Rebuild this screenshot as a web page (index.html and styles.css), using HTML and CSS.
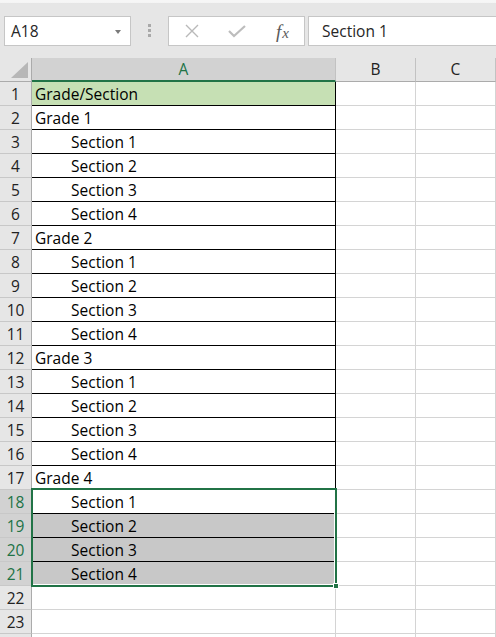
FILE: index.html
```html
<!DOCTYPE html>
<html>
<head>
<meta charset="utf-8">
<link rel="stylesheet" href="styles.css">
</head>
<body>
<div class="app">
  <div class="topstrip"></div>
  <div class="toolbar">
    <div class="namebox"><span class="ref">A18</span><span class="caret"></span></div>
    <div class="dots"><i></i><i></i><i></i></div>
    <div class="fbtns">
      <div class="fbtn">
        <svg width="14" height="14" viewBox="0 0 14 14"><path d="M1 1 L13 13 M13 1 L1 13" stroke="#b9b9b9" stroke-width="1.4" fill="none"/></svg>
      </div>
      <div class="fbtn">
        <svg width="18" height="14" viewBox="0 0 18 14"><path d="M1 7 L6 12 L17 2" stroke="#bdbdbd" stroke-width="2.2" fill="none"/></svg>
      </div>
      <div class="fbtn fx"><span class="f">f</span><span class="x">x</span></div>
    </div>
    <div class="formula">Section 1</div>
  </div>

  <div class="sheet">
    <div class="corner"><svg width="32" height="24" viewBox="0 0 32 24"><path d="M11 20 L28 20 L28 4 Z" fill="#b7b7b7"/></svg></div>
    <div class="ch on">A</div>
    <div class="ch">B</div>
    <div class="ch">C</div>

    <div class="rh">1</div><div class="c a head">Grade/Section</div><div class="c"></div><div class="c"></div>
    <div class="rh">2</div><div class="c a">Grade 1</div><div class="c"></div><div class="c"></div>
    <div class="rh">3</div><div class="c a ind">Section 1</div><div class="c"></div><div class="c"></div>
    <div class="rh">4</div><div class="c a ind">Section 2</div><div class="c"></div><div class="c"></div>
    <div class="rh">5</div><div class="c a ind">Section 3</div><div class="c"></div><div class="c"></div>
    <div class="rh">6</div><div class="c a ind">Section 4</div><div class="c"></div><div class="c"></div>
    <div class="rh">7</div><div class="c a">Grade 2</div><div class="c"></div><div class="c"></div>
    <div class="rh">8</div><div class="c a ind">Section 1</div><div class="c"></div><div class="c"></div>
    <div class="rh">9</div><div class="c a ind">Section 2</div><div class="c"></div><div class="c"></div>
    <div class="rh">10</div><div class="c a ind">Section 3</div><div class="c"></div><div class="c"></div>
    <div class="rh">11</div><div class="c a ind">Section 4</div><div class="c"></div><div class="c"></div>
    <div class="rh">12</div><div class="c a">Grade 3</div><div class="c"></div><div class="c"></div>
    <div class="rh">13</div><div class="c a ind">Section 1</div><div class="c"></div><div class="c"></div>
    <div class="rh">14</div><div class="c a ind">Section 2</div><div class="c"></div><div class="c"></div>
    <div class="rh">15</div><div class="c a ind">Section 3</div><div class="c"></div><div class="c"></div>
    <div class="rh">16</div><div class="c a ind">Section 4</div><div class="c"></div><div class="c"></div>
    <div class="rh">17</div><div class="c a">Grade 4</div><div class="c"></div><div class="c"></div>
    <div class="rh on">18</div><div class="c a ind">Section 1</div><div class="c"></div><div class="c"></div>
    <div class="rh on">19</div><div class="c a ind sel">Section 2</div><div class="c"></div><div class="c"></div>
    <div class="rh on">20</div><div class="c a ind sel">Section 3</div><div class="c"></div><div class="c"></div>
    <div class="rh on">21</div><div class="c a ind sel">Section 4</div><div class="c"></div><div class="c"></div>
    <div class="rh">22</div><div class="c"></div><div class="c"></div><div class="c"></div>
    <div class="rh">23</div><div class="c"></div><div class="c"></div><div class="c"></div>
    <div class="rh"></div><div class="c"></div><div class="c"></div><div class="c"></div>

    <div class="selection"><div class="handle"></div></div>
  </div>
</div>
</body>
</html>
```

FILE: styles.css
```css
* { box-sizing: border-box; }
html, body { margin: 0; padding: 0; }
body {
  width: 496px;
  height: 637px;
  overflow: hidden;
  background: #ffffff;
  font-family: "Open Sans", "Noto Sans", sans-serif;
}
.app { width: 496px; height: 637px; overflow: hidden; }

.topstrip {
  height: 4px;
  background: linear-gradient(#f6f6f6 0, #f6f6f6 60%, #dedede 100%);
}
.toolbar {
  height: 54px;
  background: #e6e6e6;
  display: flex;
  align-items: flex-start;
  padding-top: 12px;
  padding-left: 4px;
  overflow: hidden;
}
.toolbar > * { flex-shrink: 0; }
.namebox {
  width: 127px;
  height: 30px;
  background: #fff;
  border: 1px solid #c6c6c6;
  display: flex;
  align-items: center;
  justify-content: space-between;
  padding: 0 9px 0 6px;
  color: #262626;
  font-size: 15.5px;
}
.caret {
  width: 0; height: 0;
  border-left: 3.5px solid transparent;
  border-right: 3.5px solid transparent;
  border-top: 4px solid #7a7a7a;
  margin-top: 1px;
}
.dots {
  width: 3px;
  margin-left: 17px;
  margin-top: 8px;
  display: flex;
  flex-direction: column;
  gap: 2px;
}
.dots i { display: block; width: 3px; height: 3px; background: #a9a9a9; }
.fbtns {
  margin-left: 17px;
  width: 137px;
  height: 30px;
  background: #fff;
  border: 1px solid #c6c6c6;
  display: flex;
}
.fbtn {
  width: 45px;
  height: 28px;
  display: flex;
  align-items: center;
  justify-content: center;
}
.fx {
  font-family: "Liberation Serif", "DejaVu Serif", serif;
  font-style: italic;
  color: #5a5a5a;
  padding-left: 2px;
}
.fx .f { font-size: 19px; line-height: 1; }
.fx .x { font-size: 15px; line-height: 1; margin-top: 4px; margin-left: 1px; }
.formula {
  margin-left: 3px;
  width: 200px;
  height: 30px;
  background: #fff;
  border: 1px solid #c6c6c6;
  padding-left: 13px;
  font-size: 15.5px;
  line-height: 28px;
  color: #262626;
}

.sheet {
  position: relative;
  display: grid;
  grid-template-columns: 32px 304px 80px 80px;
  grid-auto-rows: 24px;
  font-size: 15.5px;
  color: #000;
}
.corner {
  background: #e6e6e6;
  border-right: 1px solid #ababab;
  border-bottom: 1px solid #ababab;
}
.corner svg { display: block; }
.ch {
  background: #e6e6e6;
  border-right: 1px solid #c2c2c2;
  border-bottom: 1px solid #ababab;
  text-align: center;
  line-height: 23px;
  color: #222;
}
.ch.on {
  background: #d2d2d2;
  color: #217346;
  border-bottom: 2px solid #217346;
  line-height: 22px;
}
.rh {
  background: #e6e6e6;
  border-right: 1px solid #ababab;
  border-bottom: 1px solid #c8c8c8;
  text-align: center;
  line-height: 24px;
  color: #222;
  overflow: hidden;
}
.rh.on { background: #d2d2d2; color: #217346; }
.c {
  border-right: 1px solid #d4d4d4;
  border-bottom: 1px solid #d4d4d4;
  line-height: 24px;
  padding-left: 3px;
  white-space: nowrap;
  overflow: hidden;
}
.c.a { border-right-color: #000; border-bottom-color: #000; }
.c.head { background: #c6e0b4; }
.c.ind { padding-left: 39px; }
.c.sel { background: #c8c8c8; }

.selection {
  position: absolute;
  left: 31px;
  top: 430px;
  width: 306px;
  height: 99px;
  border: 2px solid #217346;
  box-shadow: inset -1px -1px 0 #ffffff;
  pointer-events: none;
}
.handle {
  position: absolute;
  left: 300px;
  top: 93px;
  width: 6px;
  height: 6px;
  background: #217346;
  border: 1px solid #ffffff;
}
```
